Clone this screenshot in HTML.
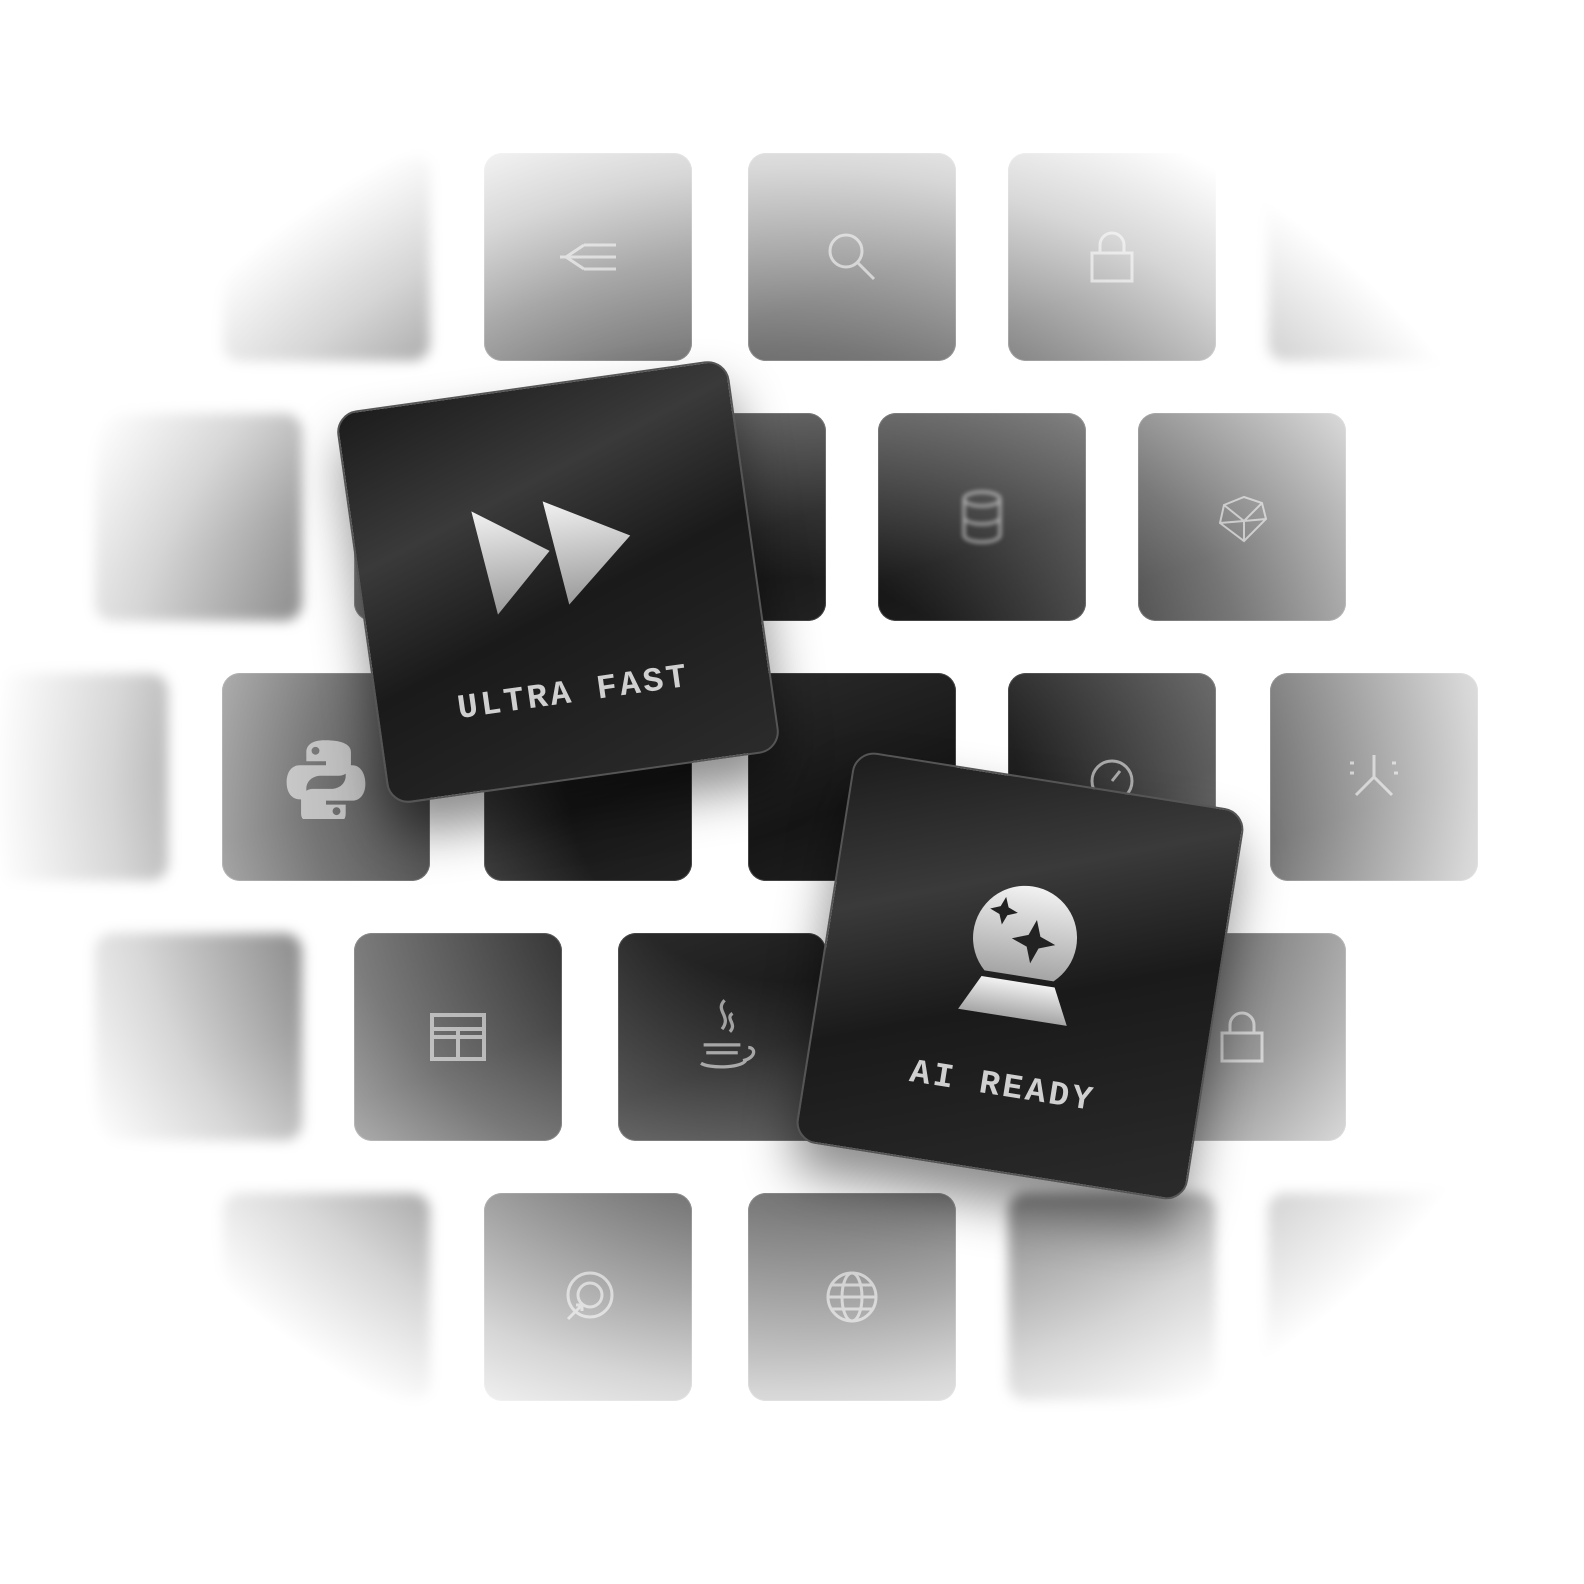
<!DOCTYPE html>
<html><head><meta charset="utf-8"><style>
html,body{margin:0;padding:0;background:#fff;width:1584px;height:1584px;overflow:hidden;position:relative;font-family:"Liberation Mono",monospace}
.t{position:absolute;width:208px;height:208px;border-radius:18px;background:linear-gradient(160deg,#2a2a2a,#161616 60%,#222);box-shadow:0 0 0 1px #444 inset;display:flex;align-items:center;justify-content:center}
.t svg{width:64px;height:64px;stroke:#9a9a9a;fill:none;stroke-width:3}
.b{filter:blur(6px)}
#ov{position:absolute;left:0;top:0;width:1584px;height:1584px;background:radial-gradient(ellipse 800px 720px at 792px 780px,rgba(255,255,255,0) 28%,rgba(255,255,255,.4) 60%,rgba(255,255,255,.82) 85%,#fff 100%)}
.big{position:absolute;width:392px;height:392px;border-radius:22px;background:linear-gradient(160deg,#1c1c1c 0%,#3a3a3a 30%,#1a1a1a 55%,#2b2b2b 100%);border:2px solid #555;box-shadow:0 30px 50px rgba(0,0,0,.45);color:#cfcfcf}
.big .lab{position:absolute;left:0;right:0;text-align:center;font-size:34px;font-weight:bold;letter-spacing:3px;font-family:"Liberation Mono",monospace;color:#d0d0d0}
</style></head><body>
<div class="t b" style="left:222px;top:153px"></div>
<div class="t" style="left:484px;top:153px"><svg viewBox="0 0 64 64"><path d="M4 32h56M28 20h32M28 44h32M28 20l-18 12 18 12"/></svg></div>
<div class="t" style="left:748px;top:153px"><svg viewBox="0 0 64 64"><circle cx="26" cy="26" r="16"/><path d="M38 38l16 16"/></svg></div>
<div class="t" style="left:1008px;top:153px"><svg viewBox="0 0 64 64"><rect x="12" y="28" width="40" height="28"/><path d="M20 28v-8a12 12 0 0124 0v8"/></svg></div>
<div class="t b" style="left:1268px;top:153px"></div>
<div class="t b" style="left:94px;top:413px"></div>
<div class="t" style="left:354px;top:413px"></div>
<div class="t" style="left:618px;top:413px"></div>
<div class="t" style="left:878px;top:413px"><svg viewBox="0 0 64 64" style="filter:blur(2px)"><ellipse cx="32" cy="14" rx="18" ry="7"/><path d="M14 14v36c0 4 8 7 18 7s18-3 18-7V14M14 32c0 4 8 7 18 7s18-3 18-7"/></svg></div>
<div class="t" style="left:1138px;top:413px"><svg viewBox="0 0 64 64" style="stroke-width:2"><path d="M14 20l20-8 18 6 4 16-22 22-24-18zM14 20l20 16 18-18M34 36l0 20M56 34L34 36 10 38"/></svg></div>
<div class="t b" style="left:-40px;top:673px"></div>
<div class="t" style="left:222px;top:673px"><svg viewBox="0 0 64 64" style="fill:#9a9a9a;stroke:none;width:84px;height:84px"><path d="M31 4c-10 0-14 4-14 9v7h15v3H12c-6 0-10 5-10 13s4 13 10 13h5v-8c0-6 5-10 11-10h14c5 0 9-4 9-9V13c0-5-5-9-20-9zm-7 5a3 3 0 110 6 3 3 0 010-6zM47 23v8c0 6-5 10-11 10H22c-5 0-9 4-9 9v10c0 5 5 9 20 9 10 0 14-4 14-9v-7H32v-3h20c6 0 10-5 10-13s-4-14-10-14zm-7 32a3 3 0 110 6 3 3 0 010-6z"/></svg></div>
<div class="t" style="left:484px;top:673px"></div>
<div class="t" style="left:748px;top:673px"></div>
<div class="t" style="left:1008px;top:673px"><svg viewBox="0 0 64 64"><circle cx="32" cy="36" r="20"/><path d="M32 36l8-10"/></svg></div>
<div class="t" style="left:1270px;top:673px"><svg viewBox="0 0 64 64"><path d="M32 10v22M14 50l18-18 18 18M8 18h4M50 18h4M8 28h4M52 28h4"/></svg></div>
<div class="t b" style="left:94px;top:933px"></div>
<div class="t" style="left:354px;top:933px"><svg viewBox="0 0 64 64" style="stroke-width:4"><rect x="6" y="10" width="52" height="44"/><path d="M6 32h52M32 24v30M6 24h52"/></svg></div>
<div class="t" style="left:618px;top:933px"><svg viewBox="0 0 64 64" style="width:84px;height:84px;stroke-width:2.5"><path d="M34 4c-8 8 6 12-2 22M40 14c-6 4 4 8-2 14M18 38h28M20 44h24M16 52c6 4 30 4 34-2M52 40c6 0 6 8-4 10"/></svg></div>
<div class="t" style="left:878px;top:933px"></div>
<div class="t" style="left:1138px;top:933px"><svg viewBox="0 0 64 64"><rect x="12" y="28" width="40" height="28"/><path d="M20 28v-8a12 12 0 0124 0v8"/></svg></div>
<div class="t b" style="left:222px;top:1193px"></div>
<div class="t" style="left:484px;top:1193px"><svg viewBox="0 0 64 64"><circle cx="34" cy="30" r="22"/><circle cx="34" cy="30" r="12"/><path d="M12 54l14-14M20 40h6v6"/></svg></div>
<div class="t" style="left:748px;top:1193px"><svg viewBox="0 0 64 64"><circle cx="32" cy="32" r="24"/><ellipse cx="32" cy="32" rx="10" ry="24"/><path d="M8 32h48M12 20h40M12 44h40"/></svg></div>
<div class="t b" style="left:1008px;top:1193px"></div>
<div class="t b" style="left:1268px;top:1193px"></div>
<div id="ov"></div>
<div class="big" style="left:360px;top:384px;transform:rotate(-8deg)">
<svg viewBox="0 0 160 110" style="position:absolute;left:118px;top:110px;width:160px;height:110px"><defs><linearGradient id="g" x1="0" y1="0" x2="0" y2="1"><stop offset="0" stop-color="#f2f2f2"/><stop offset="1" stop-color="#9a9a9a"/></linearGradient></defs><path d="M2 4l72 50-60 56zM74 4l82 46-70 60z" fill="url(#g)"/></svg>
<div class="lab" style="top:290px">ULTRA FAST</div></div>
<div class="big" style="left:822px;top:778px;transform:rotate(9deg)">
<svg viewBox="0 0 130 150" style="position:absolute;left:130px;top:90px;width:130px;height:150px"><defs><linearGradient id="h" x1="0" y1="0" x2="0" y2="1"><stop offset="0" stop-color="#f2f2f2"/><stop offset="1" stop-color="#a5a5a5"/></linearGradient></defs><path d="M30 106a52 52 0 1170 0z" fill="url(#h)"/><path d="M28 112h74l18 36H10z" fill="url(#h)"/><path d="M40 30l4 10 10 4-10 4-4 10-4-10-10-4 10-4zM74 48l6 16 16 6-16 6-6 16-6-16-16-6 16-6z" fill="#222"/></svg>
<div class="lab" style="top:290px">AI READY</div></div>
</body></html>
